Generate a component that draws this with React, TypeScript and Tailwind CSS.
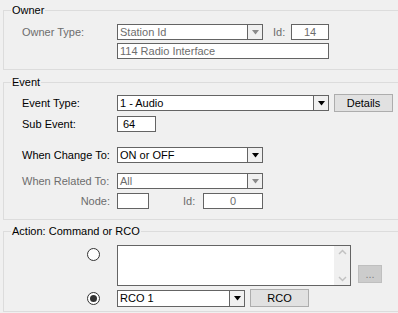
import React from 'react';

const font = { fontFamily: '"Liberation Sans", Arial, sans-serif' };

const Arrow: React.FC<{ disabled?: boolean }> = ({ disabled }) => (
  <svg width="7" height="5" viewBox="0 0 7 5">
    <polygon points="0,0 7,0 3.5,4.5" fill={disabled ? '#8a8a8a' : '#000000'} />
  </svg>
);

const Combo: React.FC<{ value: string; width: string; disabled?: boolean; h?: string }> = ({ value, width, disabled, h = 'h-[16px]' }) => (
  <div className={`${width} ${h} flex border border-[#646464] bg-white`}>
    <div className={`flex-1 pl-[2px] leading-[14px] ${disabled ? 'text-[#6d6d6d]' : 'text-black'}`}>{value}</div>
    <div className="w-[15px] border-l border-[#646464] bg-[#f0f0f0] flex items-center justify-center">
      <Arrow disabled={disabled} />
    </div>
  </div>
);

const Field: React.FC<{ value: string; width: string; disabled?: boolean; center?: boolean; pad?: string }> = ({ value, width, disabled, center, pad = 'pl-[2px]' }) => (
  <div
    className={`${width} h-[16px] border border-[#646464] bg-white leading-[14px] ${center ? 'text-center' : pad} ${disabled ? 'text-[#6d6d6d]' : 'text-black'}`}
  >
    {value}
  </div>
);

const Button: React.FC<{ label: string; width: string; h?: string }> = ({ label, width, h = 'h-[18px]' }) => (
  <div className={`${width} ${h} border border-[#adadad] bg-[#e1e1e1] flex items-center justify-center text-black`}>
    {label}
  </div>
);

const Radio: React.FC<{ checked?: boolean }> = ({ checked }) => (
  <div className="w-[13px] h-[13px] rounded-full border border-[#333333] bg-white flex items-center justify-center">
    {checked && <div className="w-[7px] h-[7px] rounded-full bg-[#333333]" />}
  </div>
);

const Group: React.FC<{ title: string; className: string; children: React.ReactNode }> = ({ title, className, children }) => (
  <div className={`relative w-[420px] border border-[#dcdcdc] ${className}`}>
    <span className="absolute -top-[7px] left-[7px] px-[1px] bg-[#f0f0f0] leading-[13px] text-black">{title}</span>
    {children}
  </div>
);

const Label: React.FC<{ text: string; disabled?: boolean; right?: boolean }> = ({ text, disabled, right }) => (
  <div className={`w-[95px] ${right ? 'text-right pr-[7px]' : ''} ${disabled ? 'text-[#6d6d6d]' : 'text-black'}`}>{text}</div>
);

export default function App() {
  return (
    <div className="w-[398px] h-[313px] overflow-hidden bg-[#f0f0f0] pl-[3px] text-[11px] select-none" style={font}>
      {/* Owner */}
      <Group title="Owner" className="mt-[10px] h-[60px] pt-[13px] pl-[18px]">
        <div className="flex items-center h-[16px]">
          <Label text="Owner Type:" disabled />
          <Combo value="Station Id" width="w-[146px]" disabled />
          <div className="ml-[10px] w-[18px] text-[#6d6d6d]">Id:</div>
          <Field value="14" width="w-[38px]" disabled center />
        </div>
        <div className="flex items-center h-[16px] mt-[3px]">
          <div className="w-[95px]" />
          <Field value="114 Radio Interface" width="w-[212px]" disabled />
        </div>
      </Group>

      {/* Event */}
      <Group title="Event" className="mt-[12px] h-[138px] pt-[12px] pl-[18px]">
        <div className="flex items-center h-[16px]">
          <Label text="Event Type:" />
          <Combo value="1 - Audio" width="w-[212px]" />
          <div className="ml-[5px]">
            <Button label="Details" width="w-[59px]" />
          </div>
        </div>
        <div className="flex items-center h-[16px] mt-[5px]">
          <Label text="Sub Event:" />
          <Field value="64" width="w-[39px]" pad="pl-[5px]" />
        </div>
        <div className="flex items-center h-[16px] mt-[15px]">
          <Label text="When Change To:" />
          <Combo value="ON or OFF" width="w-[146px]" />
        </div>
        <div className="flex items-center h-[16px] mt-[10px]">
          <Label text="When Related To:" disabled />
          <Combo value="All" width="w-[146px]" disabled />
        </div>
        <div className="flex items-center h-[16px] mt-[4px]">
          <Label text="Node:" disabled right />
          <Field value="" width="w-[32px]" />
          <div className="ml-[34px] w-[20px] text-[#6d6d6d]">Id:</div>
          <Field value="0" width="w-[60px]" disabled center />
        </div>
      </Group>

      {/* Action */}
      <Group title="Action: Command or RCO" className="mt-[11px] h-[81px] pt-[13px] pl-[18px]">
        <div className="flex items-start">
          <div className="w-[95px] pl-[65px] pt-[3px]">
            <Radio />
          </div>
          <div className="w-[234px] h-[41px] border border-[#646464] bg-white flex justify-end">
            <div className="w-[16px] h-full bg-[#f0f0f0] flex flex-col items-center justify-between py-[3px]">
              <svg width="9" height="6" viewBox="0 0 9 6">
                <polyline points="1,5 4.5,1.5 8,5" fill="none" stroke="#c2c2c2" strokeWidth="1.5" />
              </svg>
              <svg width="9" height="6" viewBox="0 0 9 6">
                <polyline points="1,1 4.5,4.5 8,1" fill="none" stroke="#c2c2c2" strokeWidth="1.5" />
              </svg>
            </div>
          </div>
          <div className="ml-[7px] mt-[20px] w-[24px] h-[18px] border border-[#bfbfbf] bg-[#cccccc] flex items-center justify-center text-[#838383] leading-[10px]">
            ...
          </div>
        </div>
        <div className="flex items-center h-[18px] mt-[3px]">
          <div className="w-[95px] pl-[65px]">
            <Radio checked />
          </div>
          <Combo value="RCO 1" width="w-[128px]" h="h-[17px]" />
          <div className="ml-[5px]">
            <Button label="RCO" width="w-[59px]" />
          </div>
        </div>
      </Group>
    </div>
  );
}
